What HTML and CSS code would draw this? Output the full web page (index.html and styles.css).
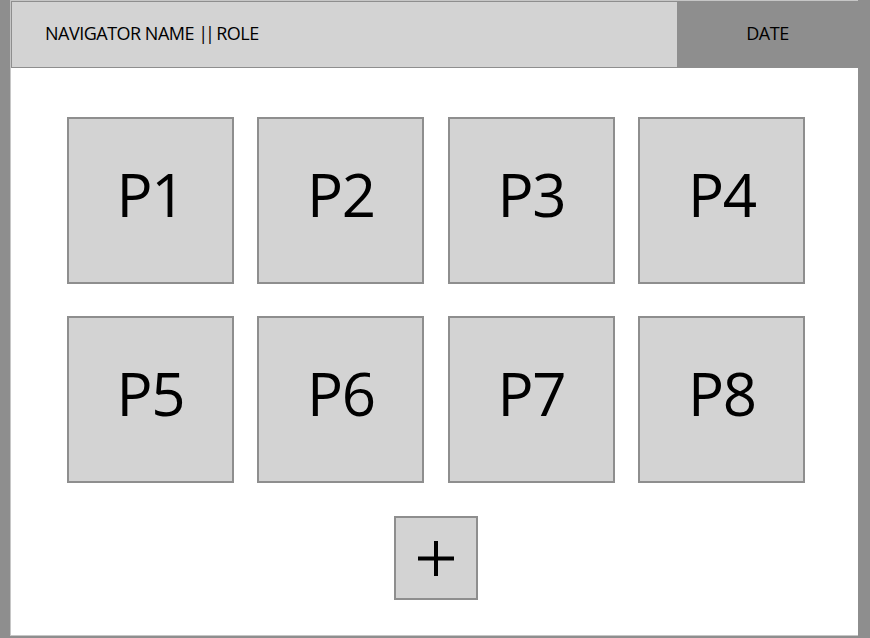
FILE: index.html
```html
<!DOCTYPE html>
<html>
<head>
<meta charset="utf-8">
<link rel="stylesheet" href="styles.css">
</head>
<body>
<div class="frame">
  <header class="topbar">
    <div class="who">NAVIGATOR NAME <span class="bars">||</span> ROLE</div>
    <div class="date">DATE</div>
  </header>
  <main class="content">
    <div class="grid">
      <div class="tile">P1</div>
      <div class="tile">P2</div>
      <div class="tile">P3</div>
      <div class="tile">P4</div>
      <div class="tile">P5</div>
      <div class="tile">P6</div>
      <div class="tile">P7</div>
      <div class="tile">P8</div>
    </div>
    <div class="add">
      <svg width="37" height="37" viewBox="0 0 37 37"><path d="M0 18.5H36M18 1V36" stroke="#000" stroke-width="4" fill="none"/></svg>
    </div>
  </main>
</div>
</body>
</html>
```
FILE: styles.css
```css
html, body {
  margin: 0;
  padding: 0;
  height: 100%;
}
body {
  background: #8e8e8e;
  font-family: "Open Sans", "Noto Sans", sans-serif;
  color: #000;
}
.frame {
  margin-left: 10px;
  width: 848px;
  height: 636px;
  background: #fff;
  border-left: 1px solid #c6c6c6;
  border-bottom: 1px solid #c6c6c6;
  border-top: 1px solid #c6c6c6;
  box-sizing: border-box;
  display: flex;
  flex-direction: column;
}
.topbar {
  display: flex;
  height: 67px;
  box-sizing: border-box;
  border: 1px solid #8e8e8e;
  border-right: none;
  background: #d3d3d3;
}
.who {
  flex: 1;
  display: flex;
  align-items: center;
  padding-left: 33px;
  font-size: 18px;
  letter-spacing: -0.5px;
  padding-bottom: 4px;
  white-space: pre;
}
.bars {
  letter-spacing: -3px;
  margin-right: 0;
}
.date {
  width: 181px;
  background: #8e8e8e;
  display: flex;
  align-items: center;
  justify-content: center;
  font-size: 18px;
  letter-spacing: -0.5px;
  padding-bottom: 4px;
}
.content {
  flex: 1;
  display: flex;
  flex-direction: column;
  align-items: center;
  padding-top: 49px;
}
.grid {
  display: grid;
  grid-template-columns: repeat(4, 167px);
  grid-auto-rows: 167px;
  column-gap: 23.5px;
  row-gap: 32px;
  margin-left: 3px;
}
.tile {
  background: #d3d3d3;
  border: 2px solid #8e8e8e;
  box-sizing: border-box;
  display: flex;
  align-items: center;
  justify-content: center;
  font-size: 60px;
  letter-spacing: -1.5px;
  padding-bottom: 14px;
}
.add {
  margin-top: 33px;
  width: 84px;
  height: 84px;
  box-sizing: border-box;
  background: #d3d3d3;
  border: 2px solid #8e8e8e;
  display: flex;
  align-items: center;
  justify-content: center;
  margin-left: 3px;
}
```
